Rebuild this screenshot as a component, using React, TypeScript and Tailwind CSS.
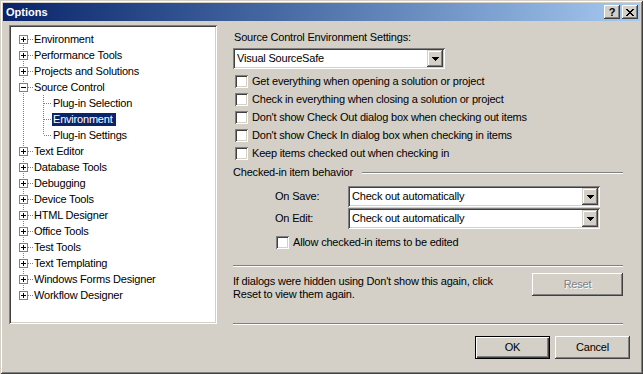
import React from 'react';

type Node = { label: string; box?: '+' | '-'; child?: boolean; lastChild?: boolean; selected?: boolean };

const tree: Node[] = [
  { label: 'Environment', box: '+' },
  { label: 'Performance Tools', box: '+' },
  { label: 'Projects and Solutions', box: '+' },
  { label: 'Source Control', box: '-' },
  { label: 'Plug-in Selection', child: true },
  { label: 'Environment', child: true, selected: true },
  { label: 'Plug-in Settings', child: true, lastChild: true },
  { label: 'Text Editor', box: '+' },
  { label: 'Database Tools', box: '+' },
  { label: 'Debugging', box: '+' },
  { label: 'Device Tools', box: '+' },
  { label: 'HTML Designer', box: '+' },
  { label: 'Office Tools', box: '+' },
  { label: 'Test Tools', box: '+' },
  { label: 'Text Templating', box: '+' },
  { label: 'Windows Forms Designer', box: '+' },
  { label: 'Workflow Designer', box: '+' },
];

const checks = [
  'Get everything when opening a solution or project',
  'Check in everything when closing a solution or project',
  "Don't show Check Out dialog box when checking out items",
  "Don't show Check In dialog box when checking in items",
  'Keep items checked out when checking in',
];

const raised =
  'shadow-[inset_-1px_-1px_0_#404040,inset_1px_1px_0_#fff,inset_-2px_-2px_0_#808080]';
const sunken =
  'shadow-[inset_1px_1px_0_#808080,inset_-1px_-1px_0_#fff,inset_2px_2px_0_#404040,inset_-2px_-2px_0_#d4d0c8]';

function TreeLines({ node, first, last }: { node: Node; first: boolean; last: boolean }) {
  const dot = { stroke: '#808080', strokeDasharray: '1 1', shapeRendering: 'crispEdges' as const };
  return (
    <svg width={node.child ? 41 : 22} height={16} className="shrink-0">
      <line x1={12.5} y1={first ? 8 : 0} x2={12.5} y2={last ? 8 : 16} {...dot} />
      {node.child ? (
        <>
          <line x1={32.5} y1={0} x2={32.5} y2={node.lastChild ? 8 : 16} {...dot} />
          <line x1={33} y1={8.5} x2={41} y2={8.5} {...dot} />
        </>
      ) : (
        <>
          <line x1={17} y1={8.5} x2={22} y2={8.5} {...dot} />
          <rect x={8.5} y={4.5} width={8} height={8} fill="#fff" stroke="#808080" shapeRendering="crispEdges" />
          <line x1={10} y1={8.5} x2={15} y2={8.5} stroke="#000" shapeRendering="crispEdges" />
          {node.box === '+' && (
            <line x1={12.5} y1={6} x2={12.5} y2={11} stroke="#000" shapeRendering="crispEdges" />
          )}
        </>
      )}
    </svg>
  );
}

function Checkbox() {
  return <div className={`w-[13px] h-[13px] shrink-0 bg-white ${sunken}`} />;
}

function Combo({ value, width }: { value: string; width: string }) {
  return (
    <div className={`${width} h-[21px] flex p-[2px] bg-white ${sunken}`}>
      <span className="flex-1 pl-[2px] leading-[17px] whitespace-nowrap">{value}</span>
      <div className="w-[16px] h-[17px] bg-[#d4d0c8] flex items-center justify-center shadow-[inset_-1px_-1px_0_#404040,inset_1px_1px_0_#d4d0c8,inset_-2px_-2px_0_#808080,inset_2px_2px_0_#fff]">
        <svg width="7" height="4" shapeRendering="crispEdges">
          <path d="M0 0h7v1H0zM1 1h5v1H1zM2 2h3v1H2zM3 3h1v1H3z" fill="#000" />
        </svg>
      </div>
    </div>
  );
}

function Etched({ className = '' }: { className?: string }) {
  return <div className={`h-[2px] border-t border-t-[#808080] border-b border-b-white ${className}`} />;
}

export default function App() {
  return (
    <div className="w-[643px] h-[374px] overflow-hidden bg-[#d4d0c8] text-[11px] tracking-[-0.2px] text-black font-['Liberation_Sans',Arial,sans-serif] shadow-[inset_1px_1px_0_#d4d0c8,inset_-1px_-1px_0_#404040,inset_2px_2px_0_#fff,inset_-2px_-2px_0_#808080] pt-[3px]">
      {/* Title bar */}
      <div className="mx-[3px] h-[18px] flex items-center pl-[3px] pr-[2px] bg-linear-to-r from-[#0a246a] to-[#a6caf0]">
        <span className="text-white font-bold tracking-normal">Options</span>
        <div className="ml-auto flex gap-[2px]">
          <div className={`w-[16px] h-[14px] bg-[#d4d0c8] flex items-center justify-center font-bold text-[11px] leading-none tracking-normal ${raised}`}>
            ?
          </div>
          <div className={`w-[16px] h-[14px] bg-[#d4d0c8] flex items-center justify-center ${raised}`}>
            <svg width="8" height="7" shapeRendering="crispEdges">
              <path
                d="M0 0h2v1H0zM6 0h2v1H6zM1 1h2v1H1zM5 1h2v1H5zM2 2h4v1H2zM3 3h2v1H3zM2 4h4v1H2zM1 5h2v1H1zM5 5h2v1H5zM0 6h2v1H0zM6 6h2v1H6z"
                fill="#000"
              />
            </svg>
          </div>
        </div>
      </div>

      {/* Body */}
      <div className="flex pl-[9px] pt-[4px]">
        {/* Tree */}
        <div className={`w-[208px] h-[299px] bg-white pt-[6px] pl-[2px] ${sunken}`}>
          {tree.map((n, i) => (
            <div key={i} className="h-[16px] flex items-center">
              <TreeLines node={n} first={i === 0} last={i === tree.length - 1} />
              <span
                className={`h-[13px] leading-[13px] px-[1px] whitespace-nowrap ${
                  n.selected ? 'bg-[#0a246a] text-white pr-[3px]' : ''
                }`}
              >
                {n.label}
              </span>
            </div>
          ))}
        </div>

        {/* Settings */}
        <div className="ml-[16px] w-[390px] flex flex-col">
          <div className="mt-[6px] h-[13px] leading-[13px] pl-[1px]">Source Control Environment Settings:</div>
          <div className="mt-[4px]">
            <Combo value="Visual SourceSafe" width="w-[212px]" />
          </div>
          <div className="mt-[3px]">
            {checks.map(c => (
              <div key={c} className="h-[18px] flex items-center">
                <div className="ml-[2px]">
                  <Checkbox />
                </div>
                <span className="ml-[4px] whitespace-nowrap">{c}</span>
              </div>
            ))}
          </div>

          <div className="mt-[4px] h-[13px] flex items-center">
            <span className="whitespace-nowrap">Checked-in item behavior</span>
            <Etched className="flex-1 ml-[9px]" />
          </div>

          <div className="mt-[7px] h-[21px] flex items-center">
            <span className="ml-[42px] w-[73px]">On Save:</span>
            <Combo value="Check out automatically" width="w-[252px]" />
          </div>
          <div className="mt-[1px] h-[21px] flex items-center">
            <span className="ml-[42px] w-[73px]">On Edit:</span>
            <Combo value="Check out automatically" width="w-[252px]" />
          </div>
          <div className="mt-[4px] h-[18px] flex items-center">
            <div className="ml-[43px]">
              <Checkbox />
            </div>
            <span className="ml-[4px]">Allow checked-in items to be edited</span>
          </div>

          <Etched className="mt-[14px]" />

          <div className="mt-[6px] h-[23px] flex items-start">
            <div className="pt-[2px] leading-[13px] whitespace-nowrap">
              If dialogs were hidden using Don't show this again, click
              <br />
              Reset to view them again.
            </div>
            <div
              className={`ml-auto w-[91px] h-[23px] flex items-center justify-center text-[#808080] [text-shadow:1px_1px_0_#fff] ${raised}`}
            >
              Reset
            </div>
          </div>

          <Etched className="mt-[27px]" />
        </div>
      </div>

      {/* Footer */}
      <div className="mt-[11px] flex justify-end gap-[5px] pr-[13px]">
        <div className="w-[75px] h-[23px] flex items-center justify-center shadow-[inset_0_0_0_1px_#000,inset_2px_2px_0_#fff,inset_-2px_-2px_0_#404040,inset_-3px_-3px_0_#808080]">
          OK
        </div>
        <div className={`w-[75px] h-[23px] flex items-center justify-center ${raised}`}>Cancel</div>
      </div>
    </div>
  );
}
